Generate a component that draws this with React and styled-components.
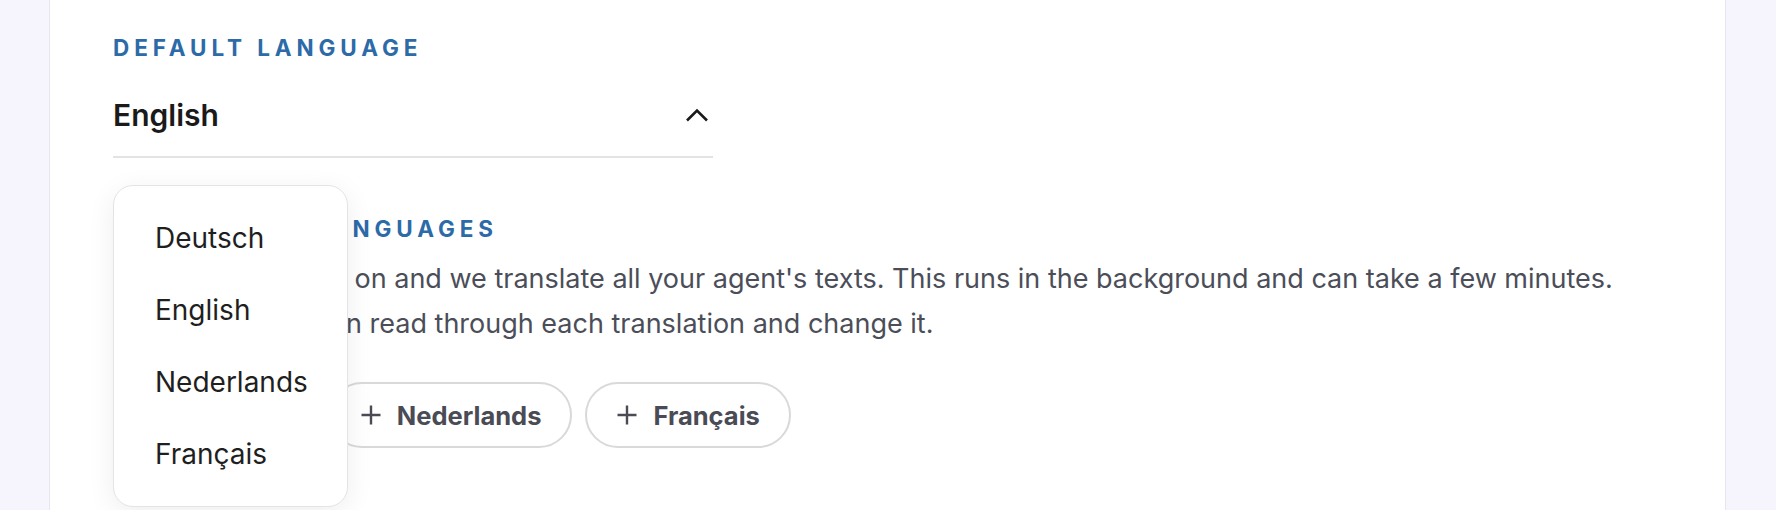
import React from 'react'
import styled, { createGlobalStyle } from 'styled-components'

const GlobalStyle = createGlobalStyle`
  html, body {
    margin: 0;
    padding: 0;
    background: #f6f5fd;
    font-family: Inter, "Noto Sans", sans-serif;
  }
  * { box-sizing: border-box; }
`

const Page = styled.div`
  height: 510px;
  overflow: hidden;
  padding: 0 50px 0 49px;
`

const Panel = styled.section`
  height: 100%;
  background: #fff;
  border-left: 1px solid #e8e7f1;
  border-right: 1px solid #e8e7f1;
  padding: 35px 64px 0 63px;
`

const Label = styled.h3`
  margin: 0;
  font-size: 22.5px;
  line-height: 26px;
  font-weight: 700;
  letter-spacing: 4.9px;
  text-transform: uppercase;
  color: #2d6aa8;
`

const Field = styled.div`
  position: relative;
  width: 600px;
  margin: 15px 0 58px;
`

const Select = styled.button`
  width: 100%;
  height: 82px;
  display: flex;
  align-items: center;
  justify-content: space-between;
  padding: 0 4px 2px 0;
  background: none;
  border: none;
  border-bottom: 2px solid #e3e3e3;
  font-family: inherit;
  font-size: 30px;
  line-height: 36px;
  font-weight: 600;
  color: #1a1a1a;
  cursor: pointer;
`

const Menu = styled.ul`
  position: absolute;
  top: 109px;
  left: 0;
  z-index: 10;
  width: 235px;
  margin: 0;
  padding: 16px 0 16px;
  list-style: none;
  background: #fff;
  border: 1px solid #e4e4e6;
  border-radius: 20px;
  box-shadow: 0 6px 28px rgba(0, 0, 0, 0.07);
`

const Option = styled.li`
  height: 72px;
  display: flex;
  align-items: center;
  padding-left: 41px;
  font-size: 28px;
  color: #1f1f1f;
`

const Description = styled.p`
  margin: 15px 0 36px;
  font-size: 27px;
  line-height: 44.5px;
  color: #4b4e59;
`

const Chips = styled.div`
  display: flex;
  gap: 13px;
`

const Chip = styled.button`
  height: 66px;
  display: inline-flex;
  align-items: center;
  gap: 16px;
  padding: 0 29px 0 30px;
  background: #fff;
  border: 2px solid #d9d9dc;
  border-radius: 999px;
  font-family: inherit;
  font-size: 25.5px;
  font-weight: 700;
  color: #4a4b55;
  cursor: pointer;
`

const languages = ['Deutsch', 'English', 'Nederlands', 'Français']

function Chevron() {
  return (
    <svg width="24" height="14" viewBox="0 0 24 14" fill="none">
      <polyline points="2,12.5 12,2.5 22,12.5" stroke="#1a1a1a" strokeWidth="2.6" />
    </svg>
  )
}

function Plus() {
  return (
    <svg width="20" height="20" viewBox="0 0 20 20" fill="none">
      <path d="M10 0.5v19M0.5 10h19" stroke="#4a4b55" strokeWidth="2.4" />
    </svg>
  )
}

export default function App() {
  return (
    <Page>
      <GlobalStyle />
      <Panel>
        <Label>Default language</Label>
        <Field>
          <Select>
            English
            <Chevron />
          </Select>
          <Menu>
            {languages.map((lang) => (
              <Option key={lang}>{lang}</Option>
            ))}
          </Menu>
        </Field>

        <Label>Additional languages</Label>
        <Description>
          Switch a language on and we translate all your agent's texts. This runs in the background
          and can take a few minutes. Afterwards you can read through each translation and change it.
        </Description>
        <Chips>
          {languages
            .filter((lang) => lang !== 'English')
            .map((lang) => (
              <Chip key={lang}>
                <Plus />
                {lang}
              </Chip>
            ))}
        </Chips>
      </Panel>
    </Page>
  )
}
